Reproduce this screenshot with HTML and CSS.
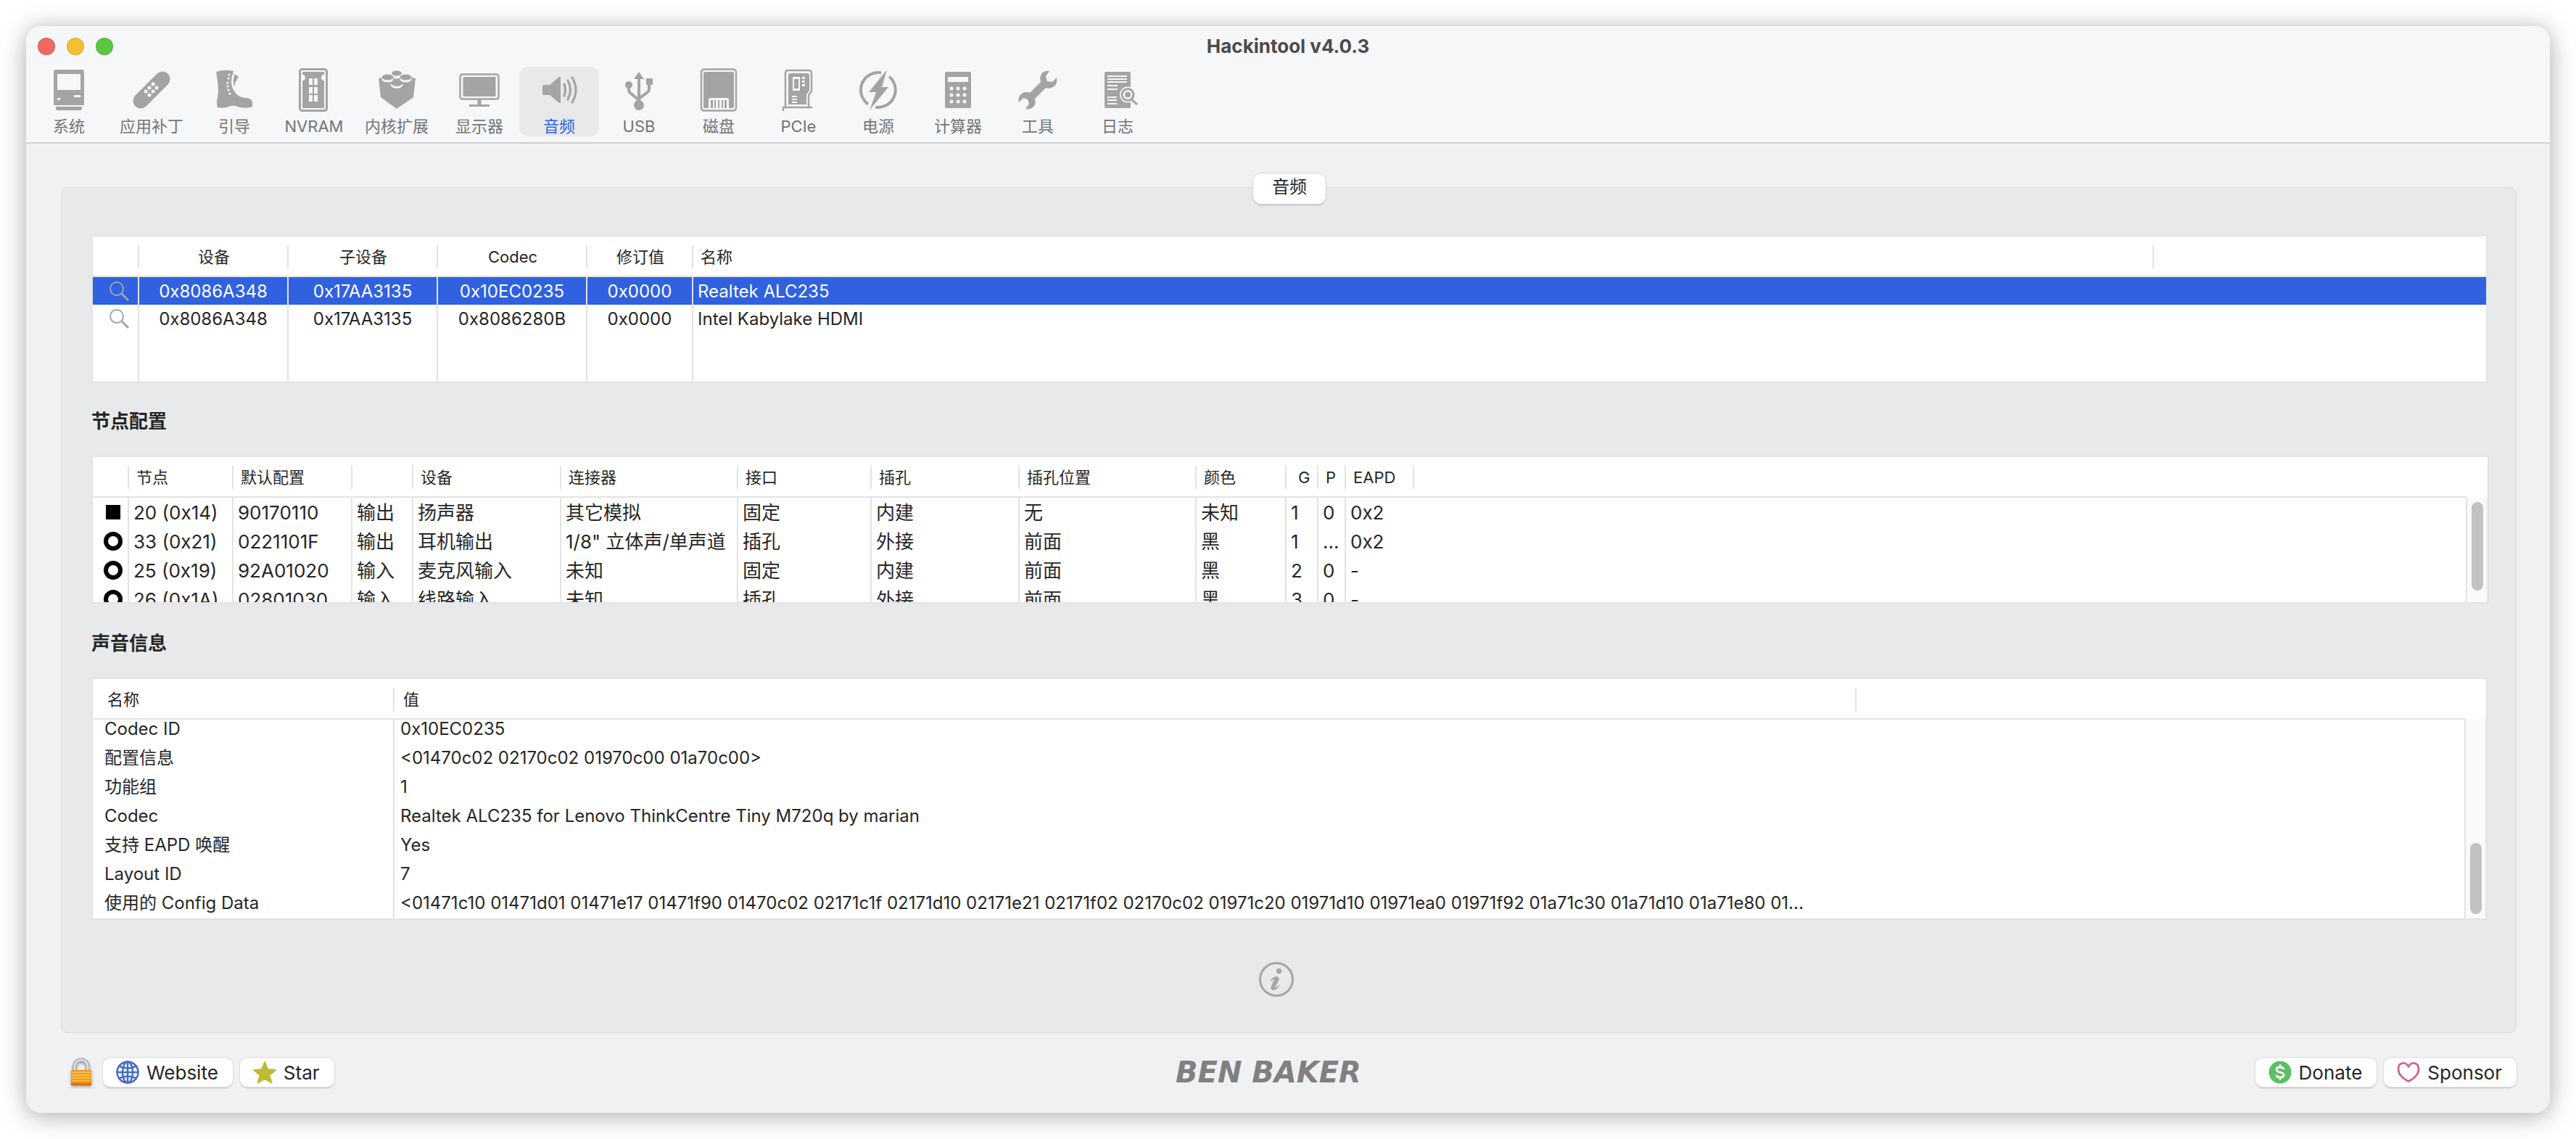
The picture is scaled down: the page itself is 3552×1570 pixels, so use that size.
FILE: index.html
```html
<!DOCTYPE html>
<html lang="zh-CN">
<head>
<meta charset="utf-8">
<meta name="viewport" content="width=device-width, initial-scale=1">
<title>Hackintool v4.0.3</title>
<link rel="stylesheet" href="styles.css">
</head>
<body>
<div class="window">
  <header class="chrome">
    <div class="titlebar">
      <div class="lights">
        <button class="light light-close" aria-label="关闭"></button>
        <button class="light light-min" aria-label="最小化"></button>
        <button class="light light-zoom" aria-label="缩放"></button>
      </div>
      <h1 class="title">Hackintool v4.0.3</h1>
    </div>
    <nav class="toolbar">
      <button class="tool">
        <svg class="tool-icon" viewBox="0 0 64 64"><path fill-rule="evenodd" d="M14 4H50Q53 4 53 8V53H11V8Q11 4 14 4ZM16 10V32H48V10ZM39 39V42H48V39ZM16 43V46H20V43Z"/><path d="M14 55H50V58Q50 60 48 60H16Q14 60 14 58Z"/></svg>
        <span>系统</span>
      </button>
      <button class="tool tool-wide">
        <svg class="tool-icon" viewBox="0 0 64 64"><path class="line" stroke-width="21" stroke-linecap="round" d="M17 47 47 17"/><g class="hole"><circle cx="34" cy="24" r="2.5"/><circle cx="39" cy="29" r="2.5"/><circle cx="29" cy="29" r="2.5"/><circle cx="34" cy="34" r="2.5"/><circle cx="24" cy="34" r="2.5"/><circle cx="29" cy="39" r="2.5"/></g></svg>
        <span>应用补丁</span>
      </button>
      <button class="tool">
        <svg class="tool-icon" viewBox="0 0 64 64"><path d="M7 7Q18 3 31 6L30 10C27 18 27 26 32 34C36 40 42 43 49 43Q57 44 57 50V55Q50 58 40 56Q32 53 27 54Q18 58 9 56Q7 50 9 42Q11 30 9 20Z"/><path d="M33 10 38 14Q33 20 32 28Q29 18 33 10Z"/><g class="hole"><circle cx="25" cy="11" r="1.6"/><circle cx="24" cy="16" r="1.6"/><circle cx="23" cy="22" r="1.6"/><circle cx="23" cy="27" r="1.6"/><circle cx="24" cy="32" r="1.6"/><circle cx="26" cy="37" r="1.6"/></g></svg>
        <span>引导</span>
      </button>
      <button class="tool">
        <svg class="tool-icon" viewBox="0 0 64 64"><rect class="line" stroke-width="3" x="12.500" y="3.500" width="37" height="57" rx="3"/><path fill-rule="evenodd" d="M16 7H46V11A4 4 0 0 0 46 19V57H16V19A4 4 0 0 0 16 11ZM25 16V25H30V16ZM32 16V25H37V16ZM25 28V37H30V28ZM32 28V37H37V28ZM25 39V48H30V39ZM32 39V48H37V39Z"/></svg>
        <span>NVRAM</span>
      </button>
      <button class="tool tool-wide">
        <svg class="tool-icon" viewBox="0 0 64 64"><path d="M7 16 32 12 58 16 55 42 32 58 10 42Z"/><g class="stud"><ellipse cx="19.500" cy="17" rx="8" ry="4.500"/><ellipse cx="44.500" cy="17" rx="8" ry="4.500"/><ellipse cx="32" cy="12" rx="7" ry="4.500"/></g><ellipse cx="19.500" cy="14.500" rx="8" ry="4"/><ellipse cx="44.500" cy="14.500" rx="8" ry="4"/><ellipse cx="32" cy="9" rx="7" ry="3.500"/><path class="hole" d="M23 23Q32 31 41 23Q40 30 32 30Q24 30 23 23Z"/></svg>
        <span>内核扩展</span>
      </button>
      <button class="tool">
        <svg class="tool-icon" viewBox="0 0 64 64"><rect class="line" stroke-width="2.500" x="5.500" y="10.500" width="53" height="34" rx="3"/><rect x="9.500" y="14" width="45" height="27" rx="1"/><path d="M29.500 45H34.500V52H46V55H18V52H29.500Z"/></svg>
        <span>显示器</span>
      </button>
      <button class="tool tool-active" aria-current="page">
        <svg class="tool-icon" viewBox="0 0 64 64"><path d="M11 25H19L32 14H34V50H32L19 39H11Q9 39 9 37V27Q9 25 11 25Z"/><g class="line" stroke-width="3.200" stroke-linecap="round"><path d="M39 24Q42 32 39 40"/><path d="M44 19Q51 32 44 45"/><path d="M50 15Q60 32 50 49"/></g></svg>
        <span>音频</span>
      </button>
      <button class="tool">
        <svg class="tool-icon" viewBox="0 0 64 64"><path d="M32 7 39 17H25Z"/><circle cx="32" cy="53" r="7"/><circle cx="18" cy="25" r="5"/><rect x="42" y="16" width="9" height="9"/><g class="line" stroke-width="4"><path d="M32 16V50"/><path d="M18 27V32Q18 34 20 36L32 46"/><path d="M46 24V31Q46 33 44 35L32 44"/></g></svg>
        <span>USB</span>
      </button>
      <button class="tool">
        <svg class="tool-icon" viewBox="0 0 64 64"><rect class="line" stroke-width="2.500" x="8" y="3.500" width="48" height="57" rx="4"/><path fill-rule="evenodd" d="M13 7H51Q53 7 53 9V55Q53 57 51 57H46V46Q46 43 43 43H21Q18 43 18 46V57H13Q11 57 11 55V9Q11 7 13 7Z"/><path d="M21 46H24V57H21ZM26 46H28V57H26ZM31 46H33V57H31ZM36 46H38V57H36ZM40 46H43V57H40Z"/></svg>
        <span>磁盘</span>
      </button>
      <button class="tool">
        <svg class="tool-icon" viewBox="0 0 64 64"><path class="line" stroke-width="2.500" d="M14 55V9Q14 5 18 5H46Q50 5 50 9V34L46 39V55M11 61V56H51"/><path fill-rule="evenodd" d="M20 9H44Q47 9 47 12V33L43 38V52H18V12Q18 9 20 9ZM24 14V33H34V14ZM37 14V17H41V14ZM37 19V22H41V19ZM37 24V27H41V24ZM23 40V42H30V40ZM23 44V46H30V44ZM23 48V50H30V48Z"/><rect x="26" y="17" width="6" height="13"/></svg>
        <span>PCIe</span>
      </button>
      <button class="tool">
        <svg class="tool-icon" viewBox="0 0 64 64"><g class="line" stroke-width="4"><path d="M36 8.300A24 24 0 0 0 18 51.500"/><path d="M47 13.500A24 24 0 0 1 28 55.700"/></g><path d="M44 4 19 35H29L20 60 46 28H37Z"/></svg>
        <span>电源</span>
      </button>
      <button class="tool">
        <svg class="tool-icon" viewBox="0 0 64 64"><path fill-rule="evenodd" d="M16 7H48Q50 7 50 9V55Q50 57 48 57H16Q14 57 14 55V9Q14 7 16 7ZM18 14V21H46V14Z"/><g class="hole"><circle cx="23" cy="30" r="2.500"/><circle cx="32" cy="30" r="2.500"/><circle cx="41" cy="30" r="2.500"/><circle cx="23" cy="39" r="2.500"/><circle cx="32" cy="39" r="2.500"/><circle cx="41" cy="39" r="2.500"/><circle cx="23" cy="48" r="2.500"/><circle cx="32" cy="48" r="2.500"/><circle cx="41" cy="48" r="2.500"/></g></svg>
        <span>计算器</span>
      </button>
      <button class="tool">
        <svg class="tool-icon" viewBox="0 0 64 64"><path d="M48 6 43 13 45 20 52 21 58 15Q60 24 53 28Q48 31 43 29L28 44Q30 50 27 54Q22 60 15 58L20 51 18 45 12 43 6 49Q4 41 10 37Q15 33 21 36L36 21Q34 15 37 10Q41 5 48 6Z"/></svg>
        <span>工具</span>
      </button>
      <button class="tool">
        <svg class="tool-icon" viewBox="0 0 64 64"><rect x="14" y="7" width="36" height="50" rx="2"/><path class="rule" d="M18 13H45M18 17H45M18 21H45M18 26H32M18 31H32M18 42H31M18 46H31M18 51H31"/><circle class="hole" cx="46" cy="38.500" r="11"/><circle class="line" stroke-width="3" cx="46" cy="38.500" r="8"/><circle cx="46" cy="38.500" r="4"/><path class="line" stroke-width="3" d="M51 45 59 52"/></svg>
        <span>日志</span>
      </button>
    </nav>
  </header>

  <main class="content">
    <section class="panel">
      <button class="segment">音频</button>

      <div class="grid-box">
        <table class="grid devices">
          <colgroup><col class="w64"><col class="w206"><col class="w206"><col class="w206"><col class="w146"><col class="w2014"><col></colgroup>
          <thead><tr><th></th><th scope="col">设备</th><th scope="col">子设备</th><th scope="col">Codec</th><th scope="col">修订值</th><th scope="col" class="start">名称</th><th></th></tr></thead>
          <tbody>
            <tr class="selected"><td><svg class="lens" viewBox="0 0 28 28"><circle cx="10" cy="10" r="9"/><path d="M17 17 26 26"/></svg></td><td>0x8086A348</td><td>0x17AA3135</td><td>0x10EC0235</td><td>0x0000</td><td class="start">Realtek ALC235</td><td></td></tr>
            <tr><td><svg class="lens" viewBox="0 0 28 28"><circle cx="10" cy="10" r="9"/><path d="M17 17 26 26"/></svg></td><td>0x8086A348</td><td>0x17AA3135</td><td>0x8086280B</td><td>0x0000</td><td class="start">Intel Kabylake HDMI</td><td></td></tr>
            <tr class="filler"><td></td><td></td><td></td><td></td><td></td><td></td><td></td></tr>
          </tbody>
        </table>
      </div>

      <h2 class="heading">节点配置</h2>
      <div class="grid-box nodes-box">
        <table class="grid nodes">
          <colgroup><col class="w50"><col class="w144"><col class="w164"><col class="w84"><col class="w204"><col class="w244"><col class="w184"><col class="w204"><col class="w244"><col class="w124"><col class="w44"><col class="w38"><col class="w94"><col></colgroup>
          <thead><tr><th></th><th scope="col">节点</th><th scope="col">默认配置</th><th></th><th scope="col">设备</th><th scope="col">连接器</th><th scope="col">接口</th><th scope="col">插孔</th><th scope="col">插孔位置</th><th scope="col">颜色</th><th scope="col" class="group-col">G</th><th scope="col">P</th><th scope="col">EAPD</th><th></th></tr></thead>
          <tbody>
            <tr><td><i class="fixed"></i></td><td>20 (0x14)</td><td>90170110</td><td>输出</td><td>扬声器</td><td>其它模拟</td><td>固定</td><td>内建</td><td>无</td><td>未知</td><td>1</td><td>0</td><td>0x2</td><td></td></tr>
            <tr><td><i class="jack"></i></td><td>33 (0x21)</td><td>0221101F</td><td>输出</td><td>耳机输出</td><td>1/8" 立体声/单声道</td><td>插孔</td><td>外接</td><td>前面</td><td>黑</td><td>1</td><td>...</td><td>0x2</td><td></td></tr>
            <tr><td><i class="jack"></i></td><td>25 (0x19)</td><td>92A01020</td><td>输入</td><td>麦克风输入</td><td>未知</td><td>固定</td><td>内建</td><td>前面</td><td>黑</td><td>2</td><td>0</td><td>-</td><td></td></tr>
            <tr><td><i class="jack"></i></td><td>26 (0x1A)</td><td>02801030</td><td>输入</td><td>线路输入</td><td>未知</td><td>插孔</td><td>外接</td><td>前面</td><td>黑</td><td>3</td><td>0</td><td>-</td><td></td></tr>
          </tbody>
        </table>
        <div class="scrollbar"><div class="thumb thumb-nodes"></div></div>
      </div>

      <h2 class="heading">声音信息</h2>
      <div class="grid-box info-box">
        <table class="grid info">
          <colgroup><col class="w416"><col class="w2016"><col></colgroup>
          <thead><tr><th scope="col">名称</th><th scope="col">值</th><th></th></tr></thead>
          <tbody>
            <tr class="partial"><td>Codec ID</td><td>0x10EC0235</td><td></td></tr>
            <tr><td>配置信息</td><td>&lt;01470c02 02170c02 01970c00 01a70c00&gt;</td><td></td></tr>
            <tr><td>功能组</td><td>1</td><td></td></tr>
            <tr><td>Codec</td><td>Realtek ALC235 for Lenovo ThinkCentre Tiny M720q by marian</td><td></td></tr>
            <tr><td>支持 EAPD 唤醒</td><td>Yes</td><td></td></tr>
            <tr><td>Layout ID</td><td>7</td><td></td></tr>
            <tr><td>使用的 Config Data</td><td>&lt;01471c10 01471d01 01471e17 01471f90 01470c02 02171c1f 02171d10 02171e21 02171f02 02170c02 01971c20 01971d10 01971ea0 01971f92 01a71c30 01a71d10 01a71e80 01...</td><td></td></tr>
            <tr class="filler"><td></td><td></td><td></td></tr>
          </tbody>
        </table>
        <div class="scrollbar"><div class="thumb thumb-info"></div></div>
      </div>

      <div class="about">
        <button class="about-button" aria-label="信息"><svg viewBox="0 0 48 48"><circle cx="24" cy="24" r="22.500" fill="none" stroke="#a6a6a6" stroke-width="3"/><circle cx="27.500" cy="12.500" r="3.700" fill="#a6a6a6"/><path fill="#a6a6a6" d="M16 25Q20 20 25 20Q29 21 27 26L22 35Q25 35 28 31L28 33Q24 39 19 39Q15 38 17 33L21 24Q19 23 17 27Z"/></svg></button>
      </div>
    </section>

    <footer class="footer">
      <div class="group">
        <button class="lock" aria-label="锁定"><svg viewBox="0 0 32 40"><defs><linearGradient id="brass" x1="0" y1="0" x2="0" y2="1"><stop offset="0" stop-color="#e8921c"/><stop offset=".5" stop-color="#f6a915"/><stop offset="1" stop-color="#dd7408"/></linearGradient></defs><path d="M7 19V12A9 9 0 0 1 25 12V19" fill="none" stroke="#9b9b9b" stroke-width="5"/><path d="M7 19V12A9 9 0 0 1 25 12V19" fill="none" stroke="#dedede" stroke-width="3"/><rect x="2" y="17" width="28" height="21" rx="1" fill="url(#brass)"/><path d="M3 20H29M3 24H29M3 28H29M3 32H29" stroke="#fbc565" stroke-width="1.500"/><path d="M2 37.500H30" stroke="#c4560c"/></svg></button>
        <button class="push"><svg class="push-icon" viewBox="0 0 32 32"><g fill="none" stroke="#4a6cc3" stroke-width="2.600"><circle cx="16" cy="16" r="14.500"/><ellipse cx="16" cy="16" rx="7" ry="14.500"/><path d="M16 2V30M2 16H30M5 8Q16 13 27 8M5 24Q16 19 27 24"/></g></svg>Website</button>
        <button class="push"><svg class="push-icon" viewBox="0 0 32 32"><path fill="#bdbb38" stroke="#bdbb38" stroke-width="2" stroke-linejoin="round" d="M16 2 20 12 31 13 22.500 20 25.500 30.500 16 25 6.500 30.500 9.500 20 1 13 12 12Z"/></svg>Star</button>
      </div>
      <div class="brand">BEN BAKER</div>
      <div class="group group-end">
        <button class="push"><svg class="push-icon" viewBox="0 0 32 32"><circle cx="16" cy="16" r="15.500" fill="#5bbf64"/><path fill="none" stroke="#fff" stroke-width="2.800" stroke-linecap="round" d="M21 11Q19 9 16 9Q11 9 11 12Q11 15 16 16Q21 17 21 20Q21 23 16 23Q12 23 11 21M16 6.500V9M16 23V25.500"/></svg>Donate</button>
        <button class="push"><svg class="push-icon" viewBox="0 0 32 32"><path fill="none" stroke="#cf5f9b" stroke-width="2.600" stroke-linejoin="round" d="M16 8.500C13 1.500 2 1.500 2 11.500C2 19 9 25 16 28.500C23 25 30 19 30 11.500C30 1.500 19 1.500 16 8.500Z"/></svg>Sponsor</button>
      </div>
    </footer>
  </main>
</div>
</body>
</html>
```

FILE: styles.css
```css
* { box-sizing: border-box; }

body {
  margin: 0;
  padding: 36px;
  min-height: 100vh;
  background: #fff;
  color: #262626;
  font-family: "Inter", "Noto Sans CJK SC", sans-serif;
  font-size: 24px;
}

button {
  margin: 0;
  padding: 0;
  border: 0;
  background: none;
  color: inherit;
  font: inherit;
}

svg { display: block; }

.window {
  min-height: calc(100vh - 72px);
  border-radius: 20px;
  background: #f0f1f3;
  box-shadow: 0 4px 34px rgba(0, 0, 0, .34);
  overflow: hidden;
}

/* Title bar and toolbar */
.chrome {
  background: #f6f7f9;
  border-bottom: 2px solid #cfd0d2;
}

.titlebar {
  display: grid;
  grid-template-columns: 1fr auto 1fr;
  align-items: center;
  height: 56px;
}

.lights {
  display: flex;
  gap: 16px;
  padding-left: 16px;
}

.light {
  width: 24px;
  height: 24px;
  border-radius: 50%;
  border: 1px solid rgba(0, 0, 0, .12);
}

.light-close { background: #ee6a5f; }
.light-min { background: #f5bf31; }
.light-zoom { background: #5bc740; }

.title {
  margin: 0;
  color: #4a4a4b;
  font-size: 26px;
  font-weight: 700;
  line-height: 56px;
}

.toolbar {
  display: flex;
  padding: 0 4px 8px;
}

.tool {
  display: flex;
  flex: none;
  flex-direction: column;
  align-items: center;
  width: 110px;
  height: 96px;
  border-radius: 12px;
  color: #737475;
  font-size: 22px;
  line-height: 36px;
  white-space: nowrap;
}

.tool-wide { width: 118px; }

.tool-active {
  background: #e8e9eb;
  color: #2e62e8;
}

.tool-icon {
  flex: none;
  width: 64px;
  height: 64px;
  fill: #a4a4a4;
}

.tool-icon .line { fill: none; stroke: #a4a4a4; }
.tool-icon .hole { fill: #f6f7f9; }
.tool-icon .stud { fill: #f6f7f9; }
.tool-icon .rule { fill: none; stroke: #f6f7f9; stroke-width: 2; }

/* Panel */
.content { padding: 60px 46px 36px 48px; }

.panel {
  display: flex;
  flex-direction: column;
  padding: 0 39px 49px 41px;
  border: 1px solid #dadbdd;
  border-radius: 10px;
  background: #e8e9eb;
}

.segment {
  align-self: center;
  width: 100px;
  height: 42px;
  margin: -20px 0 43px;
  padding-bottom: 4px;
  border-radius: 11px;
  background: #fff;
  box-shadow: 0 0 0 1px #d4d5d7, 0 2px 2px #b8b9bb;
  line-height: 38px;
}

.heading {
  margin: 38px 0 32px;
  font-size: 26px;
  font-weight: 700;
  line-height: 30px;
}

/* Tables */
.grid-box {
  position: relative;
  border: 2px solid #e3e3e4;
  background: #fff;
  overflow: hidden;
}

.nodes-box {
  height: 204px;
  margin: 0 -2px 2px 0;
}

.grid {
  width: 100%;
  table-layout: fixed;
  border-collapse: separate;
  border-spacing: 0;
}

.grid th {
  height: 56px;
  padding: 2px 0 0 10px;
  border-bottom: 2px solid #e3e3e4;
  background: linear-gradient(#e3e3e4, #e3e3e4) right 12px / 2px 32px no-repeat;
  font-size: 22px;
  font-weight: 400;
  line-height: 52px;
  text-align: left;
  white-space: nowrap;
}

.grid td {
  height: 40px;
  padding: 2px 0 0 6px;
  border-right: 2px solid #e3e3e4;
  line-height: 38px;
  overflow: hidden;
  white-space: nowrap;
}

.grid th:last-child { background: none; }
.grid td:last-child,
.grid td:nth-last-child(2) { border-right: 0; }

.devices th,
.devices td {
  padding-left: 0;
  text-align: center;
}

.devices td {
  height: 38px;
  line-height: 36px;
}

.devices .start { padding-left: 6px; text-align: left; }
.devices th.start { padding-left: 10px; }
.devices .filler td { height: 68px; }
.selected { background: #2f61e0; color: #fff; }

.lens {
  width: 28px;
  height: 28px;
  margin-left: 23px;
  fill: none;
  stroke: #a3a3a3;
  stroke-width: 2;
}

.lens path { stroke-width: 3; }

.nodes td { font-size: 26px; }
.nodes th.group-col { padding-left: 16px; }

.fixed,
.jack {
  display: block;
  width: 26px;
  height: 26px;
  margin-left: 15px;
}

.nodes td:first-child { padding: 0; }
.fixed { border: 3px solid #fff; background: #000; }
.jack { border: 6px solid #000; border-radius: 50%; }

.info th { padding-left: 12px; }
.info td { padding-left: 8px; }
.info th:first-child { padding-left: 20px; }
.info td:first-child { padding-left: 16px; }

/* first row is scrolled partly under the header */
.info .partial td {
  height: 32px;
  padding-top: 0;
  padding-bottom: 6px;
  line-height: 26px;
}

.info .filler td { height: 2px; padding-top: 0; line-height: 0; }

.w38 { width: 38px; }
.w44 { width: 44px; }
.w50 { width: 50px; }
.w64 { width: 64px; }
.w84 { width: 84px; }
.w94 { width: 94px; }
.w124 { width: 124px; }
.w144 { width: 144px; }
.w146 { width: 146px; }
.w164 { width: 164px; }
.w184 { width: 184px; }
.w204 { width: 204px; }
.w206 { width: 206px; }
.w244 { width: 244px; }
.w416 { width: 416px; }
.w2014 { width: 2014px; }
.w2016 { width: 2016px; }

.scrollbar {
  position: absolute;
  top: 54px;
  right: 0;
  bottom: 0;
  width: 30px;
  border-top: 2px solid #fff;
  border-left: 2px solid #e3e3e4;
  border-right: 2px solid #efefef;
  background: #fafafa;
}

.thumb {
  position: absolute;
  left: 6px;
  width: 16px;
  border-radius: 8px;
  background: #c2c2c2;
}

.thumb-nodes { top: 6px; height: 122px; }
.thumb-info { bottom: 6px; height: 98px; }

/* Info button and footer */
.about {
  display: flex;
  justify-content: center;
  padding: 58px 36px 0 0;
}

.about-button {
  width: 48px;
  height: 48px;
}

.footer {
  display: grid;
  grid-template-columns: 1fr auto 1fr;
  align-items: center;
  padding-top: 34px;
}

.group {
  display: flex;
  align-items: center;
  gap: 10px;
  padding-left: 12px;
}

.group-end { justify-content: flex-end; padding-left: 0; }

.lock {
  width: 32px;
  height: 40px;
  margin-right: 4px;
  filter: drop-shadow(0 2px 2px rgba(0, 0, 0, .35));
}

.push {
  display: flex;
  align-items: center;
  gap: 10px;
  height: 40px;
  padding: 0 20px 0 18px;
  border-radius: 10px;
  background: #fff;
  box-shadow: 0 0 0 1px #dcdddf, 0 2px 2px #bcbdbf;
  font-size: 26px;
}

.push-icon { width: 32px; height: 32px; }

.brand {
  padding-right: 56px;
  color: #808080;
  font-family: "DejaVu Sans", sans-serif;
  font-size: 40px;
  font-style: italic;
  font-weight: 700;
  line-height: 40px;
}
```
